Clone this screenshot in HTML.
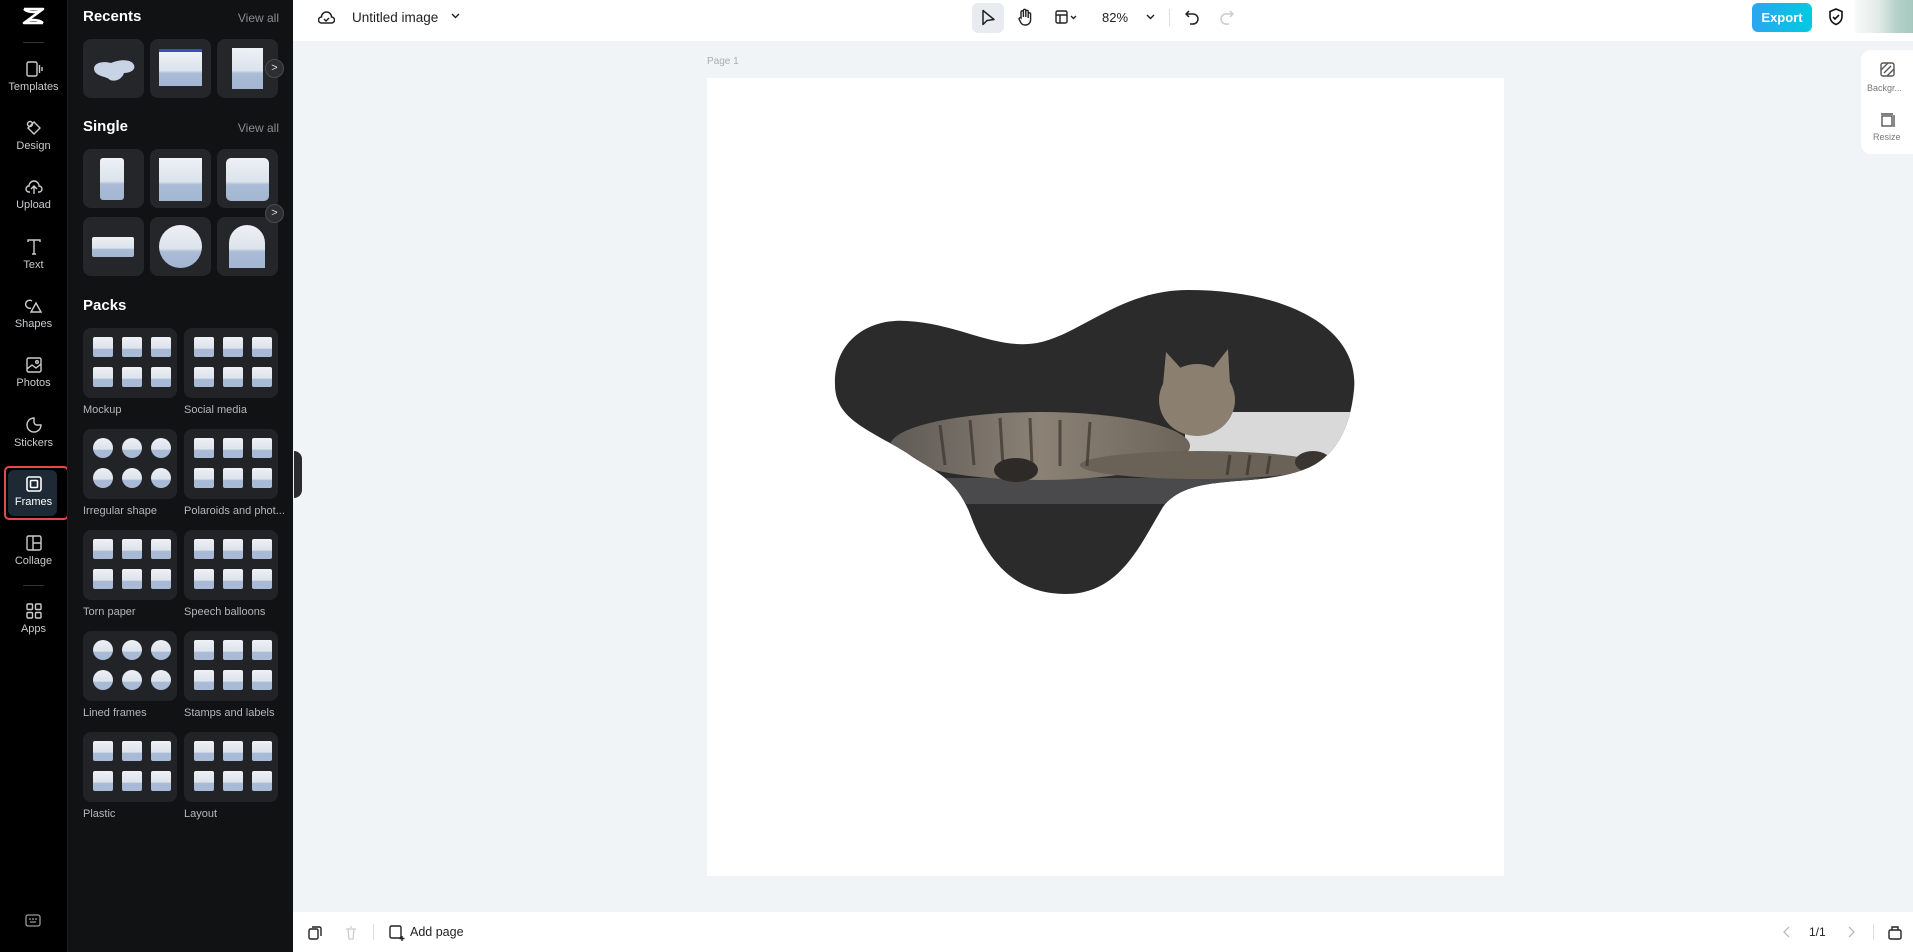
<!DOCTYPE html>
<html><head><meta charset="utf-8"><style>
*{box-sizing:border-box;margin:0;padding:0}
body{width:1913px;height:952px;overflow:hidden;font-family:"Liberation Sans",sans-serif;background:#f1f4f7;position:relative}
.rail{position:absolute;left:0;top:0;width:67px;height:952px;background:#000}
.ri{position:absolute;left:0;width:67px;text-align:center;color:#c9cacd;font-size:11px}
.ri svg{display:block;margin:0 auto 3px}
.panel{position:absolute;left:67px;top:0;width:226px;height:952px;background:#111214;border-left:1px solid #1c1d20}
.h{position:absolute;left:15px;color:#fff;font-weight:bold;font-size:15px}
.va{position:absolute;right:14px;color:#8b8c90;font-size:12px}
.tb{position:absolute;width:61px;height:59px;background:#25262a;border-radius:8px;overflow:hidden}
.sky{position:absolute;background:linear-gradient(#eef1f5 0%,#dce3ec 55%,#aabcd6 62%,#a3b6d2 100%)}
.card{position:absolute;width:94px;height:70px;background:#222327;border-radius:8px}
.card i{position:absolute;background:linear-gradient(#eef1f5 0%,#dde3ec 55%,#a8bad5 62%);border-radius:2px}
.lbl{position:absolute;color:#b5b6ba;font-size:11px}
.arr{position:absolute;width:19px;height:19px;border-radius:50%;background:#2d2e33;border:1px solid #4a4b50;color:#ddd;font-size:11px;text-align:center;line-height:17px}
.top{position:absolute;left:293px;top:0;right:0;height:41px;background:#fff}
.bot{position:absolute;left:293px;bottom:0;right:0;height:40px;background:#fff}
</style></head><body>
<div class="rail">
  <svg style="position:absolute;left:21px;top:6px" width="25" height="20" viewBox="0 0 25 20"><path d="M3 3h19L3 17h19M3 3c4 4 15 4 19 0M3 17c4-4 15-4 19 0" fill="none" stroke="#fff" stroke-width="2.6" stroke-linejoin="round"/></svg>
  <div style="position:absolute;left:23px;top:42px;width:21px;height:1px;background:#333"></div>
  <div class="ri" style="top:60px"><svg width="18" height="18" viewBox="0 0 18 18" fill="none" stroke="#ccc" stroke-width="1.4"><rect x="2" y="2" width="10" height="14" rx="1.5"/><path d="M14.5 5v8M17 7v4"/></svg>Templates</div>
  <div class="ri" style="top:119px"><svg width="18" height="18" viewBox="0 0 18 18" fill="none" stroke="#ccc" stroke-width="1.4"><circle cx="5" cy="5" r="2.5"/><path d="M9 3l6 6-6 6-6-6z"/></svg>Design</div>
  <div class="ri" style="top:178px"><svg width="18" height="18" viewBox="0 0 18 18" fill="none" stroke="#ccc" stroke-width="1.4"><path d="M5 14H4a3 3 0 0 1 0-6 5 5 0 0 1 10 0 3 3 0 0 1 0 6h-1M9 16V9M6 11l3-3 3 3"/></svg>Upload</div>
  <div class="ri" style="top:238px"><svg width="18" height="18" viewBox="0 0 18 18" fill="none" stroke="#ccc" stroke-width="1.4"><path d="M3 4V2h12v2M9 2v14M7 16h4"/></svg>Text</div>
  <div class="ri" style="top:297px"><svg width="18" height="18" viewBox="0 0 18 18" fill="none" stroke="#ccc" stroke-width="1.4"><path d="M7 4a4 4 0 1 0-1 7M11 6l5 9H6z"/></svg>Shapes</div>
  <div class="ri" style="top:356px"><svg width="18" height="18" viewBox="0 0 18 18" fill="none" stroke="#ccc" stroke-width="1.4"><rect x="2" y="2" width="14" height="14" rx="1.5"/><path d="M2 13l5-4 4 3 5-4"/><circle cx="12" cy="6" r="1.3"/></svg>Photos</div>
  <div class="ri" style="top:416px"><svg width="18" height="18" viewBox="0 0 18 18" fill="none" stroke="#ccc" stroke-width="1.4"><path d="M9 2a7 7 0 1 0 7 7h-4a3 3 0 0 1-3-3z"/></svg>Stickers</div>
  <div style="position:absolute;left:4px;top:466px;width:65px;height:54px;border:2px solid #e5484d;border-radius:5px"></div>
  <div style="position:absolute;left:8px;top:470px;width:49px;height:46px;background:#1d2a36;border-radius:6px"></div>
  <div class="ri" style="top:475px;color:#fff"><svg width="18" height="18" viewBox="0 0 18 18" fill="none" stroke="#fff" stroke-width="1.6"><rect x="2" y="2" width="14" height="14" rx="2"/><rect x="5.5" y="5.5" width="7" height="7" rx="1"/></svg>Frames</div>
  <div class="ri" style="top:534px"><svg width="18" height="18" viewBox="0 0 18 18" fill="none" stroke="#ccc" stroke-width="1.4"><rect x="2" y="2" width="14" height="14" rx="1.5"/><path d="M8 2v14M8 9h8"/></svg>Collage</div>
  <div style="position:absolute;left:23px;top:585px;width:21px;height:1px;background:#333"></div>
  <div class="ri" style="top:602px"><svg width="18" height="18" viewBox="0 0 18 18" fill="none" stroke="#ccc" stroke-width="1.4"><rect x="2" y="2" width="5.5" height="5.5" rx="1"/><rect x="10.5" y="2" width="5.5" height="5.5" rx="1"/><rect x="2" y="10.5" width="5.5" height="5.5" rx="1"/><rect x="10.5" y="10.5" width="5.5" height="5.5" rx="1"/></svg>Apps</div>
  <svg style="position:absolute;left:25px;top:914px" width="16" height="13" viewBox="0 0 16 13" fill="none" stroke="#999" stroke-width="1.3"><rect x="1" y="1" width="14" height="11" rx="2"/><path d="M5 4v2M8 4v2M11 4v2M5 8h6"/></svg>
</div>
<div class="panel">
  <div class="h" style="top:8px">Recents</div><div class="va" style="top:11px">View all</div>
  <div class="tb" style="left:15px;top:39px"><svg width="61" height="59"><path d="M11 30c0-7 10-8 17-6 6-3 20-5 23 2 2 5-4 8-10 8-2 6-8 9-14 7-3-4-15-3-16-11z" fill="#c8d4e6"/></svg></div>
  <div class="tb" style="left:82px;top:39px"><div class="sky" style="left:9px;top:10px;width:43px;height:37px;border-top:3px solid #3a4cc0"></div></div>
  <div class="tb" style="left:149px;top:39px"><div class="sky" style="left:15px;top:9px;width:31px;height:41px"></div></div>
  <div class="arr" style="left:197px;top:59px">&gt;</div>
  <div class="h" style="top:118px">Single</div><div class="va" style="top:121px">View all</div>
  <div class="tb" style="left:15px;top:149px"><div class="sky" style="left:17px;top:9px;width:24px;height:42px;border-radius:3px"></div></div>
  <div class="tb" style="left:82px;top:149px"><div class="sky" style="left:9px;top:9px;width:43px;height:43px"></div></div>
  <div class="tb" style="left:149px;top:149px"><div class="sky" style="left:9px;top:9px;width:43px;height:43px;border-radius:5px"></div></div>
  <div class="tb" style="left:15px;top:217px"><div class="sky" style="left:9px;top:20px;width:42px;height:20px;border-radius:2px"></div></div>
  <div class="tb" style="left:82px;top:217px"><div class="sky" style="left:9px;top:8px;width:43px;height:43px;border-radius:50%"></div></div>
  <div class="tb" style="left:149px;top:217px"><div class="sky" style="left:12px;top:8px;width:36px;height:43px;border-radius:18px 18px 0 0"></div></div>
  <div class="arr" style="left:197px;top:204px">&gt;</div>
  <div class="h" style="top:297px">Packs</div>
  <div id="packs"></div>
  <div style="position:absolute;left:226px;top:451px;width:8px;height:47px;background:#2a2b2f;border-radius:0 8px 8px 0"></div>
</div>
<div class="top">
  <svg style="position:absolute;left:25px;top:10px" width="17" height="14" viewBox="0 0 17 14" fill="none" stroke="#222" stroke-width="1.5"><path d="M4 13H3.5a3 3 0 0 1 0-6 5 5 0 0 1 10 0 3 3 0 0 1 0 6zM6 9l2 2 3-3"/></svg>
  <div style="position:absolute;left:59px;top:10px;font-size:13.5px;color:#222">Untitled image</div>
  <svg style="position:absolute;left:158px;top:13px" width="9" height="6"><path d="M1 1l3.5 3.5L8 1" fill="none" stroke="#222" stroke-width="1.4"/></svg>
  <div style="position:absolute;left:679px;top:3px;width:32px;height:30px;background:#e8ecf0;border-radius:6px"></div>
  <svg style="position:absolute;left:688px;top:9px" width="14" height="17"><path d="M2 1.5v14l4-4 7-1z" fill="none" stroke="#222" stroke-width="1.5" stroke-linejoin="round"/></svg>
  <svg style="position:absolute;left:724px;top:8px" width="16" height="18" viewBox="0 0 16 18" fill="none" stroke="#222" stroke-width="1.4"><path d="M4 10V4a1.2 1.2 0 0 1 2.4 0v5V2.5a1.2 1.2 0 0 1 2.4 0V9V3.5a1.2 1.2 0 0 1 2.4 0V10V6a1.2 1.2 0 0 1 2.4 0v6a5 5 0 0 1-5 5H8a5 5 0 0 1-4-2l-2-4a1.2 1.2 0 0 1 2-1z"/></svg>
  <svg style="position:absolute;left:762px;top:10px" width="24" height="14" fill="none" stroke="#222" stroke-width="1.4"><rect x="1" y="1" width="11" height="12" rx="1.5"/><path d="M1 5h11M5 5v8M16 6l2.5 2.5L21 6"/></svg>
  <div style="position:absolute;left:809px;top:10px;font-size:13px;color:#222">82%</div>
  <svg style="position:absolute;left:853px;top:14px" width="9" height="6"><path d="M1 1l3.5 3.5L8 1" fill="none" stroke="#222" stroke-width="1.4"/></svg>
  <div style="position:absolute;left:876px;top:9px;width:1px;height:17px;background:#ddd"></div>
  <svg style="position:absolute;left:892px;top:10px" width="14" height="15" fill="none" stroke="#222" stroke-width="1.5"><path d="M4 1L1 4l3 3M1 4h7a5 5 0 0 1 0 10H5"/></svg>
  <svg style="position:absolute;left:927px;top:10px" width="14" height="15" fill="none" stroke="#ccc" stroke-width="1.5"><path d="M10 1l3 3-3 3M13 4H6a5 5 0 0 0 0 10h3"/></svg>
  <div style="position:absolute;left:1459px;top:3px;width:60px;height:29px;border-radius:6px;background:linear-gradient(90deg,#2ba6f0,#00cbe0);color:#fff;font-weight:bold;font-size:13px;text-align:center;line-height:29px">Export</div>
  <svg style="position:absolute;left:1535px;top:8px" width="16" height="18" fill="none" stroke="#111" stroke-width="1.6"><path d="M8 1l6 2.5v5c0 4-3 7-6 8-3-1-6-4-6-8v-5z M5 9l2 2 4-4"/></svg>
  <div style="position:absolute;left:1562px;top:0;width:58px;height:33px;background:linear-gradient(90deg,#fafafa 0%,#e2ebe8 40%,#b7d2ca 70%,#a6c8be 100%)"></div>
</div>
<div style="position:absolute;left:707px;top:56px;font-size:10px;color:#a9adb3">Page 1</div>
<div style="position:absolute;left:707px;top:78px;width:797px;height:798px;background:#fff"></div>
<svg style="position:absolute;left:0;top:0" width="1913" height="952">
  <defs>
    <clipPath id="bl"><path d="M835 386C833 340 870 318 907 321C960 324 995 350 1037 343C1080 335 1120 290 1188 290C1290 290 1360 330 1354 390C1350 430 1335 455 1310 467C1260 490 1190 470 1163 507C1140 545 1120 594 1066 594C1010 594 985 555 970 514C955 475 930 470 907 453C870 430 836 420 835 386Z"/></clipPath>
    <linearGradient id="fur" x1="0" y1="0" x2="1" y2="0"><stop offset="0" stop-color="#5e5a55"/><stop offset=".5" stop-color="#8b8175"/><stop offset="1" stop-color="#6d6459"/></linearGradient>
  </defs>
  <g clip-path="url(#bl)">
    <rect x="830" y="285" width="530" height="315" fill="#2b2b2c"/>
    <path d="M1185 412H1360V470H1185z" fill="#d9d9da"/>
    <rect x="830" y="478" width="530" height="26" fill="#4a4a4c"/>
    <ellipse cx="1040" cy="446" rx="150" ry="34" fill="url(#fur)"/>
    <ellipse cx="1200" cy="465" rx="120" ry="14" fill="#6a6257"/>
    <g stroke="#3a342e" stroke-width="3" opacity=".7">
      <path d="M940 425l5 40M970 420l4 45M1000 418l3 48M1030 418l2 48M1060 420l0 46M1090 422l-3 44M1230 455l-3 20M1250 455l-3 20M1270 456l-3 18"/>
    </g>
    <ellipse cx="1197" cy="400" rx="38" ry="36" fill="#8b7f70"/>
    <path d="M1163 385l3-33 20 22zM1210 372l18-23 2 35z" fill="#8b7f70"/>
    <ellipse cx="1016" cy="470" rx="22" ry="12" fill="#2d2a27"/>
    <ellipse cx="1313" cy="462" rx="18" ry="11" fill="#3a3530"/>
  </g>
</svg>
<div style="position:absolute;left:1861px;top:50px;width:52px;height:104px;background:#fff;border-radius:10px 0 0 10px"></div>
<svg style="position:absolute;left:1880px;top:62px" width="15" height="15" fill="none" stroke="#555" stroke-width="1.4"><rect x="1" y="1" width="13" height="13" rx="2"/><path d="M4 11l7-7M1 8l7-7M7 14l7-7"/></svg>
<div style="position:absolute;left:1867px;top:83px;font-size:9px;color:#777">Backgr...</div>
<svg style="position:absolute;left:1880px;top:113px" width="15" height="15" fill="none" stroke="#555" stroke-width="1.4"><rect x="2" y="3" width="10" height="10"/><path d="M14 2v12M1 1h12"/></svg>
<div style="position:absolute;left:1873px;top:132px;font-size:9px;color:#777">Resize</div>
<div class="bot">
  <svg style="position:absolute;left:15px;top:14px" width="14" height="14" fill="none" stroke="#222" stroke-width="1.4"><rect x="1" y="3" width="9" height="10" rx="1.5"/><path d="M4 1h7.5a1.5 1.5 0 0 1 1.5 1.5V10"/></svg>
  <svg style="position:absolute;left:52px;top:14px" width="12" height="14" fill="none" stroke="#ccc" stroke-width="1.3"><path d="M1 3h10M3 3l1 10h4l1-10M5 1h2"/></svg>
  <div style="position:absolute;left:80px;top:12px;width:1px;height:16px;background:#ddd"></div>
  <svg style="position:absolute;left:96px;top:13px" width="16" height="16" fill="none" stroke="#222" stroke-width="1.4"><rect x="1" y="1" width="11" height="12" rx="1.5"/><path d="M13 11v5M10.5 13.5h5"/></svg>
  <div style="position:absolute;left:117px;top:13px;font-size:12.5px;color:#222">Add page</div>
  <svg style="position:absolute;left:1490px;top:14px" width="7" height="12" fill="none" stroke="#bbb" stroke-width="1.3"><path d="M6 1L1 6l5 5"/></svg>
  <div style="position:absolute;left:1516px;top:13px;font-size:12px;color:#222">1/1</div>
  <svg style="position:absolute;left:1555px;top:14px" width="7" height="12" fill="none" stroke="#bbb" stroke-width="1.3"><path d="M1 1l5 5-5 5"/></svg>
  <div style="position:absolute;left:1580px;top:12px;width:1px;height:16px;background:#ddd"></div>
  <svg style="position:absolute;left:1595px;top:12px" width="14" height="16" fill="none" stroke="#222" stroke-width="1.4"><rect x="1" y="6" width="12" height="9" rx="1.5"/><path d="M4 6V3h6v3"/></svg>
</div>
<script>
var names=["Mockup","Social media","Irregular shape","Polaroids and phot...","Torn paper","Speech balloons","Lined frames","Stamps and labels","Plastic","Layout"];
var h="";
for(var i=0;i<10;i++){var c=i%2,r=Math.floor(i/2);var x=15+c*101,y=328+r*101;
h+='<div class="card" style="left:'+x+'px;top:'+y+'px">';
for(var j=0;j<6;j++){var cx=8+(j%3)*29,cy=7+Math.floor(j/3)*30;
h+='<i style="left:'+(cx+2)+'px;top:'+(cy+2)+'px;width:20px;height:20px;'+((i==2||i==6)?'border-radius:50%':'')+'"></i>';}
h+='</div><div class="lbl" style="left:'+x+'px;top:'+(y+76)+'px">'+names[i]+'</div>';}
document.getElementById('packs').innerHTML=h;
</script>
</body></html>
